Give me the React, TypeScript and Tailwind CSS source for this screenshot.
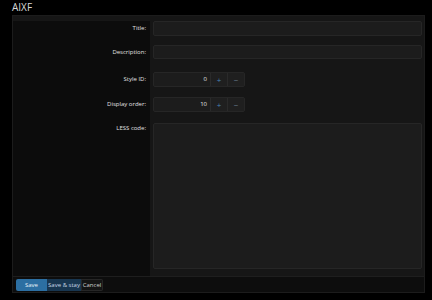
import React from "react";

const font = { fontFamily: '"Open Sans", "Liberation Sans", sans-serif' };

function Label({ children }: { children: React.ReactNode }) {
  return (
    <div className="w-[137px] shrink-0 bg-[#0c0c0c] pr-[4px] text-right text-[6px] leading-[15px] text-[#e2e2e2]">
      {children}
    </div>
  );
}

function NumberBox({ value }: { value: string }) {
  return (
    <div className="flex h-[15px] w-[92px] rounded-[2px] border border-[#262626] bg-[#1c1c1c]">
      <div className="flex-1 pr-[3px] text-right text-[6px] leading-[13px] text-[#e6e6e6]">{value}</div>
      <div className="flex w-[17px] items-center justify-center border-l border-[#2a2a2a] bg-[#1f1f1f] text-[8px] leading-none text-[#4a86b8]">+</div>
      <div className="flex w-[17px] items-center justify-center border-l border-[#2a2a2a] bg-[#1f1f1f] text-[8px] leading-none text-[#6a7f90]">−</div>
    </div>
  );
}

export default function App() {
  return (
    <div className="h-[300px] w-[432px] overflow-hidden bg-black" style={font}>
      <div className="h-[15px] pl-[12px] text-[10px] leading-[14px] text-[#d8d8d8]">AIXF</div>
      <div className="ml-[12px] flex h-[278px] w-[413px] flex-col border border-[#1c1c1c] bg-[#161616]">
        <div className="flex flex-1 flex-col">
          <div className="flex pt-[5px]">
            <Label>Title:</Label>
            <div className="flex-1 pl-[3px] pr-[2px]">
              <div className="h-[15px] rounded-[2px] border border-[#262626] bg-[#1c1c1c]" />
            </div>
          </div>
          <div className="flex h-[9px]">
            <div className="w-[137px] shrink-0 bg-[#0c0c0c]" />
          </div>
          <div className="flex">
            <Label>Description:</Label>
            <div className="flex-1 pl-[3px] pr-[2px]">
              <div className="h-[14px] rounded-[2px] border border-[#262626] bg-[#1c1c1c]" />
            </div>
          </div>
          <div className="flex h-[12px]">
            <div className="w-[137px] shrink-0 bg-[#0c0c0c]" />
          </div>
          <div className="flex">
            <Label>Style ID:</Label>
            <div className="flex-1 pl-[3px]">
              <NumberBox value="0" />
            </div>
          </div>
          <div className="flex h-[10px]">
            <div className="w-[137px] shrink-0 bg-[#0c0c0c]" />
          </div>
          <div className="flex">
            <Label>Display order:</Label>
            <div className="flex-1 pl-[3px]">
              <NumberBox value="10" />
            </div>
          </div>
          <div className="flex h-[11px]">
            <div className="w-[137px] shrink-0 bg-[#0c0c0c]" />
          </div>
          <div className="flex flex-1">
            <div className="w-[137px] shrink-0 bg-[#0c0c0c] pr-[4px] pt-[1px] text-right text-[6px] leading-[9px] text-[#e2e2e2]">LESS code:</div>
            <div className="flex flex-1 flex-col pb-[7px] pl-[3px] pr-[2px]">
              <div className="flex-1 rounded-[2px] border border-[#262626] bg-[#1c1c1c]" />
            </div>
          </div>
        </div>
        <div className="flex h-[16px] items-center border-t border-[#1e1e1e] bg-[#0d0d0d] pl-[3px]">
          <div className="flex h-[12px] overflow-hidden rounded-[2px] text-[6px] leading-[12px]">
            <div className="w-[31px] bg-[#2c6fa2] text-center text-[#eaf2f8]">Save</div>
            <div className="w-[34px] bg-[#183650] text-center text-[#c8d8e6]">Save &amp; stay</div>
            <div className="w-[22px] border border-[#262626] bg-[#141414] text-center leading-[10px] text-[#d0d0d0]">Cancel</div>
          </div>
        </div>
      </div>
    </div>
  );
}
